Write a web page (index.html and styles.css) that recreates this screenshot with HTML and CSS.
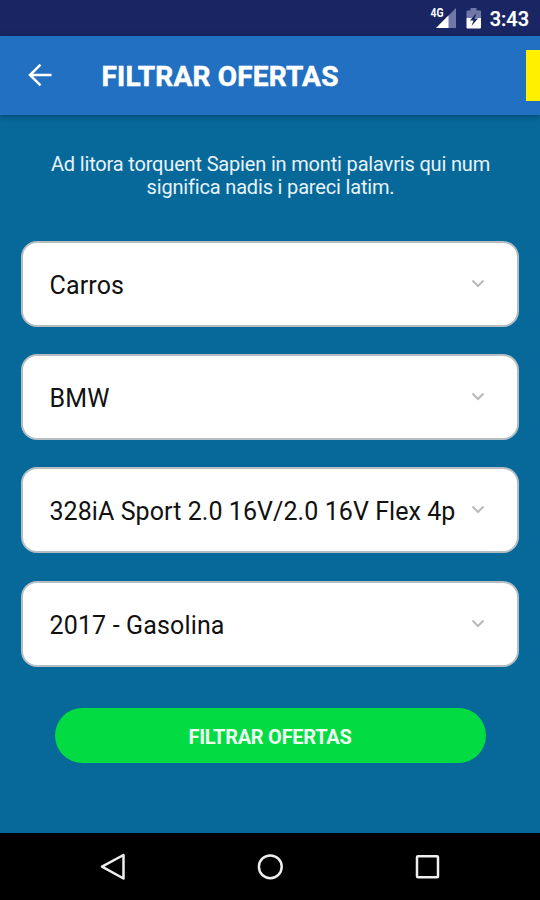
FILE: index.html
```
<!DOCTYPE html>
<html lang="pt-BR">
<head>
<meta charset="utf-8">
<title>Filtrar ofertas</title>
<link rel="stylesheet" href="styles.css">
</head>
<body>
<div class="screen">
  <div class="status">
    <svg class="signal" width="27" height="24" viewBox="0 0 27 24">
      <path d="M26 1v20H6z" fill="#6f78a8"/>
      <path d="M18.500 8.500V21H6z" fill="#fff"/>
      <path d="M0 0h14.500v11H0z" fill="#1a2663"/>
      <text x="0.5" y="10" class="network" textLength="13" lengthAdjust="spacingAndGlyphs">4G</text>
    </svg>
    <svg class="battery" width="16" height="22" viewBox="0 0 16 22">
      <path d="M4.500 0h6v2.500H14q1 0 1 1V10H.5V3.500q0-1 1-1h3z" fill="#6f78a8"/>
      <path d="M.5 10H15v9.500q0 1-1 1H1.500q-1 0-1-1z" fill="#fff"/>
      <path d="M10.500 5 4 12.500h3.500L5.500 18 12 10.500H8.500z" fill="#1a2663"/>
    </svg>
    <span class="clock">3:43</span>
  </div>
  <header class="appbar">
    <svg class="back" width="24" height="24" viewBox="0 0 24 24"><path d="M23.500 12H2M12.500 1.700 2 12l10.500 10.300"/></svg>
    <h1 class="title">FILTRAR OFERTAS</h1>
    <span class="tab"></span>
  </header>
  <main class="content">
    <p class="intro">Ad litora torquent Sapien in monti palavris qui num<br>significa nadis i pareci latim.</p>
    <div class="fields">
      <div class="field"><span>Carros</span><svg class="chevron" width="14" height="9" viewBox="0 0 14 9"><path d="m1.500 1.500 5.500 5.500 5.500-5.500"/></svg></div>
      <div class="field"><span>BMW</span><svg class="chevron" width="14" height="9" viewBox="0 0 14 9"><path d="m1.500 1.500 5.500 5.500 5.500-5.500"/></svg></div>
      <div class="field"><span class="model">328iA Sport 2.0 16V/2.0 16V Flex 4p</span><svg class="chevron" width="14" height="9" viewBox="0 0 14 9"><path d="m1.500 1.500 5.500 5.500 5.500-5.500"/></svg></div>
      <div class="field"><span>2017 - Gasolina</span><svg class="chevron" width="14" height="9" viewBox="0 0 14 9"><path d="m1.500 1.500 5.500 5.500 5.500-5.500"/></svg></div>
    </div>
    <button class="submit" type="button">FILTRAR OFERTAS</button>
  </main>
  <nav class="navbar">
    <svg width="28" height="28" viewBox="0 0 28 28"><path d="M24.500 2v23.500L3 13.700z"/></svg>
    <svg width="28" height="28" viewBox="0 0 28 28"><circle cx="14.300" cy="13.800" r="11.400"/></svg>
    <svg width="28" height="28" viewBox="0 0 28 28"><rect x="4" y="3.200" width="21" height="21" rx="1"/></svg>
  </nav>
</div>
</body>
</html>
```
FILE: styles.css
```
* { box-sizing: border-box; }
body { margin: 0; font-family: Roboto, "Liberation Sans", sans-serif; }
.screen { width: 540px; height: 900px; display: flex; flex-direction: column; background: #07689a; overflow: hidden; }
.status { height: 36px; flex: none; background: #1a2663; display: flex; justify-content: flex-end; align-items: flex-start; padding-right: 11px; }
.signal { margin: 7px 9px 0 0; }
.network { font-size: 12px; font-weight: 700; fill: #fff; }
.battery { margin: 8px 8px 0 0; }
.clock { color: #fff; font-size: 20px; font-weight: 500; line-height: 24px; margin-top: 7px; -webkit-text-stroke: .25px #fff; }
.appbar { height: 78.500px; flex: none; background: #2270c1; display: flex; align-items: center; padding-left: 28px; box-shadow: 0 1px 5px rgba(0, 35, 60, .55); position: relative; }
.back { fill: none; stroke: #fff; stroke-width: 2.500; }
.title { margin: 3px 0 0 49.500px; color: #fff; font-size: 28px; font-weight: 700; letter-spacing: .2px; line-height: 34px; white-space: nowrap; -webkit-text-stroke: .5px #fff; }
.tab { width: 14px; height: 51px; margin-left: auto; background: #fff000; }
.content { flex: 1; display: flex; flex-direction: column; align-items: center; padding-top: 38px; }
.intro { margin: 0; height: 47px; color: #e7f3fa; font-size: 20px; letter-spacing: -.17px; line-height: 23.300px; text-align: center; white-space: nowrap; padding-left: 1px; font-variant-ligatures: common-ligatures; }
.fields { width: 498px; margin-top: 41.500px; display: grid; gap: 27.200px; }
.field { height: 86px; border: 2px solid #b5bec2; border-radius: 16px; background: #fff; display: flex; align-items: center; justify-content: space-between; padding: 4px 32px 0 26.500px; color: #111; font-size: 25px; letter-spacing: .15px; line-height: 30px; white-space: nowrap; }
.model { letter-spacing: .07px; }
.chevron { flex: none; margin-top: -5px; fill: none; stroke: #b9b9b9; stroke-width: 2; }
.submit { width: 431px; height: 55px; margin-top: 41.500px; border: 0; border-radius: 28px; padding: 2px 0 0; background: #02db42; color: #effff3; font: 700 20px/24px Roboto, "Liberation Sans", sans-serif; letter-spacing: -.27px; }
.navbar { height: 67px; flex: none; background: #000; display: flex; justify-content: space-between; align-items: center; padding: 0 99px; }
.navbar svg { fill: none; stroke: #eee; stroke-width: 2.500; stroke-linejoin: round; }
```
